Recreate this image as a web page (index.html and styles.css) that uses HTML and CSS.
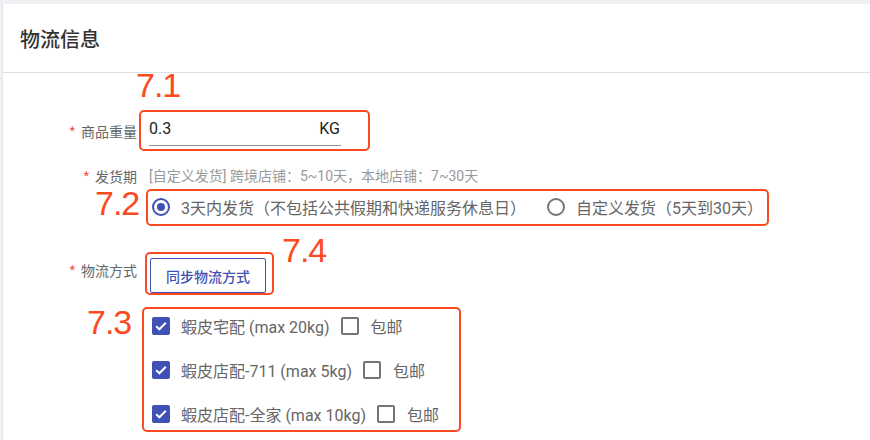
FILE: index.html
```html
<!DOCTYPE html>
<html lang="zh">
<head>
    <meta charset="UTF-8">
    <meta name="viewport" content="width=device-width, initial-scale=1.0">
    <title>物流信息</title>
    <link rel="stylesheet" href="styles.css">
</head>
<body>
    <div class="card">
        <div class="card-header">
            <h2>物流信息</h2>
        </div>
        <form class="card-body">
            <div class="form-row row-weight">
                <label class="form-label" for="weight"><span class="req">*</span>商品重量</label>
                <div class="text-input">
                    <input type="text" id="weight" value="0.3">
                    <span class="unit">KG</span>
                </div>
            </div>

            <div class="form-row row-ship">
                <label class="form-label"><span class="req">*</span>发货期</label>
                <div class="form-control">
                    <div class="hint">[自定义发货] 跨境店铺：5~10天，本地店铺：7~30天</div>
                    <div class="radio-group">
                        <label class="radio checked"><span class="radio-icon"></span>3天内发货（不包括公共假期和快递服务休息日）</label>
                        <label class="radio"><span class="radio-icon"></span>自定义发货（5天到30天）</label>
                    </div>
                </div>
            </div>

            <div class="form-row row-logistics">
                <label class="form-label"><span class="req">*</span>物流方式</label>
                <div class="form-control">
                    <button type="button" class="btn-outline">同步物流方式</button>
                    <div class="channel-list">
                        <div class="channel">
                            <span class="checkbox checked"><svg viewBox="0 0 18 18"><path d="M4.2 9.2l3.2 3.1 6.4-6.6"/></svg></span>
                            <span class="channel-name">蝦皮宅配 (max 20kg)</span>
                            <span class="checkbox"></span>
                            <span class="free">包邮</span>
                        </div>
                        <div class="channel">
                            <span class="checkbox checked"><svg viewBox="0 0 18 18"><path d="M4.2 9.2l3.2 3.1 6.4-6.6"/></svg></span>
                            <span class="channel-name">蝦皮店配-711 (max 5kg)</span>
                            <span class="checkbox"></span>
                            <span class="free">包邮</span>
                        </div>
                        <div class="channel">
                            <span class="checkbox checked"><svg viewBox="0 0 18 18"><path d="M4.2 9.2l3.2 3.1 6.4-6.6"/></svg></span>
                            <span class="channel-name">蝦皮店配-全家 (max 10kg)</span>
                            <span class="checkbox"></span>
                            <span class="free">包邮</span>
                        </div>
                    </div>
                </div>
            </div>

            <!-- annotation marks over the form -->
            <div class="mark-box box-71"></div>
            <div class="mark-box box-72"></div>
            <div class="mark-box box-74"></div>
            <div class="mark-box box-73"></div>
            <span class="mark-num num-71">7.1</span>
            <span class="mark-num num-72">7.2</span>
            <span class="mark-num num-74">7.4</span>
            <span class="mark-num num-73">7.3</span>
        </form>
    </div>
</body>
</html>
```

FILE: styles.css
```css
body {
    margin: 0;
    padding: 4px 0 0 2px;
    background-color: #eef0f3;
    font-family: Roboto, "Noto Sans CJK SC", sans-serif;
    overflow: hidden;
}
.card {
    position: relative;
    background: white;
    border-left: 1px solid #e4e4e4;
    min-height: 440px;
}
.card-header {
    height: 68px;
    display: flex;
    align-items: center;
    padding-left: 17px;
    border-bottom: 1px solid #e0e0e0;
}
.card-header h2 {
    margin: 0;
    font-size: 20px;
    font-weight: 500;
    color: #333;
}
.card-body {
    margin: 0;
}
.form-row {
    display: flex;
    align-items: flex-start;
}
.form-label {
    width: 134px;
    margin-right: 12px;
    text-align: right;
    font-size: 14px;
    line-height: 20px;
    color: #666;
}
.req {
    color: #f44336;
    font-size: 12px;
    vertical-align: 2px;
    margin-right: 6px;
}
.row-weight {
    margin-top: 40px;
}
.row-weight .form-label {
    padding-top: 8px;
}
.text-input {
    display: flex;
    align-items: center;
    width: 192px;
    border-bottom: 1px solid #949494;
    padding: 6px 0 7px;
    font-size: 16px;
    line-height: 19px;
}
.text-input input {
    flex: 1;
    min-width: 0;
    border: none;
    outline: none;
    padding: 0;
    font: inherit;
    color: #222;
    background: transparent;
}
.unit {
    color: #222;
    margin-right: 1px;
}
.row-ship {
    margin-top: 20px;
}
.hint {
    font-size: 14px;
    line-height: 20px;
    color: #999;
}
.radio-group {
    display: flex;
    height: 42px;
    align-items: center;
}
.radio {
    display: flex;
    align-items: center;
    font-size: 16px;
    color: #666;
    margin-right: 18px;
}
.radio-icon {
    box-sizing: border-box;
    width: 18px;
    height: 18px;
    border: 2px solid #757575;
    border-radius: 50%;
    margin: 0 11px 0 3px;
    display: flex;
    align-items: center;
    justify-content: center;
}
.radio.checked .radio-icon {
    border-color: #3f51b5;
}
.radio.checked .radio-icon::after {
    content: "";
    width: 8px;
    height: 8px;
    border-radius: 50%;
    background: #3f51b5;
}
.row-logistics {
    margin-top: 30px;
}
.row-logistics .form-label {
    padding-top: 2px;
}
.btn-outline {
    margin-left: 1px;
    height: 35px;
    padding: 0 15px;
    border: 1px solid #3f51b5;
    border-radius: 2px;
    background: white;
    color: #3f51b5;
    font-family: inherit;
    font-size: 14px;
    font-weight: 500;
    cursor: pointer;
}
.channel-list {
    margin-top: 11px;
}
.channel {
    display: flex;
    align-items: center;
    height: 44px;
    font-size: 16px;
    color: #666;
}
.checkbox {
    box-sizing: border-box;
    width: 18px;
    height: 18px;
    border: 2px solid #757575;
    border-radius: 2px;
    margin-left: 11px;
    margin-right: 12px;
}
.checkbox.checked {
    margin-left: 3px;
    margin-right: 11px;
    border: none;
    background: #3f51b5;
}
.checkbox svg {
    display: block;
    width: 18px;
    height: 18px;
    fill: none;
    stroke: white;
    stroke-width: 2;
}
.mark-box {
    position: absolute;
    box-sizing: border-box;
    border: 2px solid #fb4a22;
    border-radius: 5px;
}
.box-71 { left: 136px; top: 106px; width: 231px; height: 41px; }
.box-72 { left: 143px; top: 185px; width: 623px; height: 37px; }
.box-74 { left: 142px; top: 248px; width: 129px; height: 43px; }
.box-73 { left: 139px; top: 303px; width: 319px; height: 125px; }
.mark-num {
    position: absolute;
    font-family: "Liberation Sans", sans-serif;
    font-size: 34px;
    line-height: 22px;
    letter-spacing: -1px;
    color: #fb4a22;
}
.num-71 { left: 133px; top: 70px; }
.num-72 { left: 92px; top: 188px; }
.num-74 { left: 279px; top: 235px; }
.num-73 { left: 84px; top: 307px; }
```
